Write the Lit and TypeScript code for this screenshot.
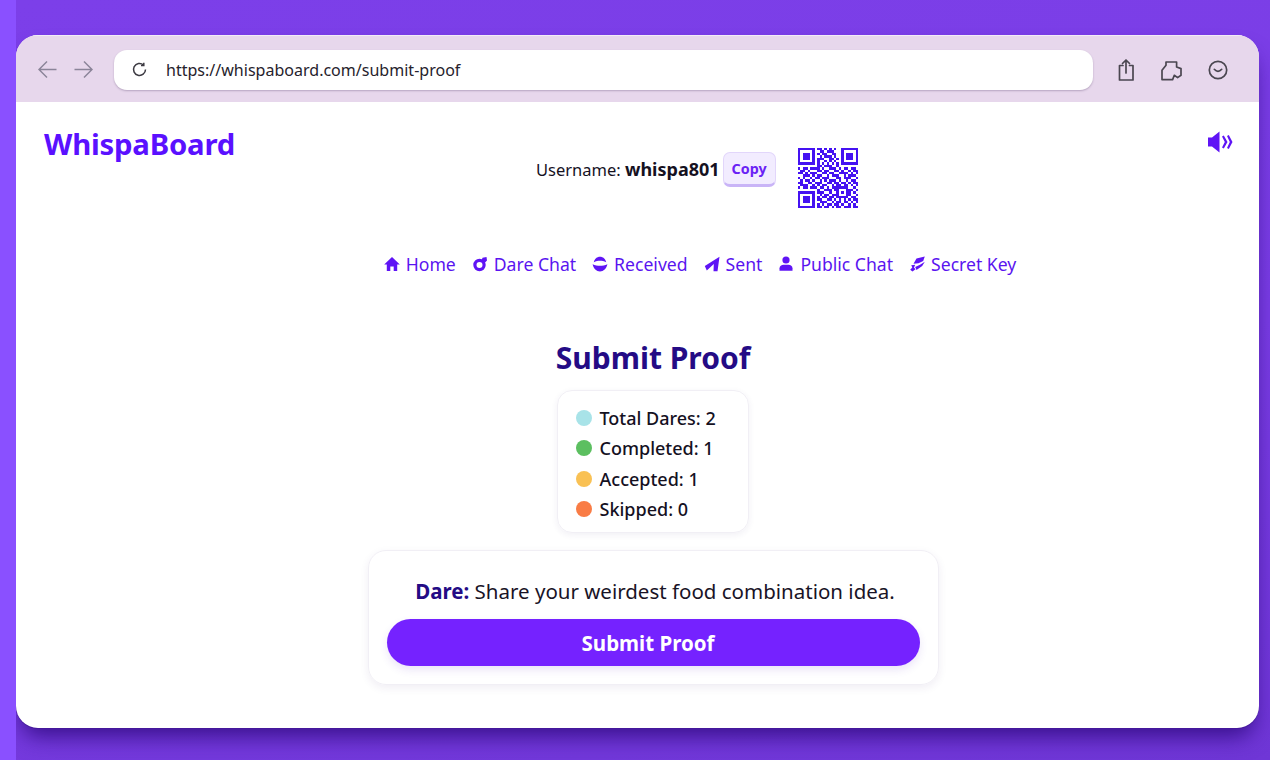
import { LitElement, html, css, svg } from "lit";
import { customElement } from "lit/decorators.js";

const QR = [
  "1111111011010101001111111",
  "1000001001101110001000001",
  "1011101010110011001011101",
  "1011101001011101001011101",
  "1011101011100110101011101",
  "1000001010010101001000001",
  "1111111010101010101111111",
  "0000000011011100100000000",
  "1011011110100111010110110",
  "0110100011011001101001011",
  "1101011100110110011110101",
  "0011101011001011100101110",
  "1010010110111000110111001",
  "0101101001010111010010110",
  "1100110111001101101101011",
  "0111001010110010110110101",
  "1011011101101011111110010",
  "0000000010011101100011101",
  "1111111011100100101011010",
  "1000001001011011100011001",
  "1011101010110110111110110",
  "1011101011001101010101011",
  "1011101001110010110110101",
  "1000001010101101101001010",
  "1111111011011010110111011",
];

const stat = [
  ["Total Dares: 2", "#a8e3e8"],
  ["Completed: 1", "#5cbf60"],
  ["Accepted: 1", "#f9c154"],
  ["Skipped: 0", "#f97c45"],
];

const navIcons = {
  home: svg`<path d="M8 1 15.800 8.500H13.200V15H9.700V10.500H6.300V15H2.800V8.500H.2Z"/>`,
  chat: svg`<path fill-rule="evenodd" d="M7.500 2.800a6.200 6.200 0 1 0 6.200 6.200 6.200 6.200 0 0 0-.6-2.600L15 4.600 14.500 1 10.500 1.800 10 3.300A6.200 6.200 0 0 0 7.500 2.800Zm0 3.200a3 3 0 1 1 0 6 3 3 0 0 1 0-6Z"/>`,
  received: svg`<path d="M1.800 6.300C2.500 3 5 .8 8 .8s5.500 2.200 6.200 5.500C12 5.200 10 4.800 8 4.800s-4 .4-6.200 1.500Z"/><path d="M.6 8.200C3 9.400 5.500 9.800 8 9.800s5-.4 7.400-1.600C14.500 12.500 11.500 15.400 8 15.400S1.500 12.500.6 8.200Z"/>`,
  sent: svg`<path d="M15.500 .8 .8 10 2.800 14.600 9.800 8 9.500 15.200 13.500 15.200Z"/>`,
  user: svg`<circle cx="8" cy="4" r="3.600"/><path d="M1.500 14.800v-2.600C1.500 10 3.500 8.800 5.500 8.800h5c2 0 4 1.200 4 3.400v2.600Z"/>`,
  key: svg`<path d="M7.500 2.500 15.800 .5 14.200 5 9.500 7.300 4.500 7.800Z"/><path d="M15.800 5.800 13.200 10 7.500 14 6.200 11 11 8.800Z"/><path d="M2.200 9.200 6.200 8.800 5 11.500 6.500 13.200 3.500 15.500 1.200 13.800 3.300 11.500Z"/>`,
};

const nav: [keyof typeof navIcons, string][] = [
  ["home", "Home"],
  ["chat", "Dare Chat"],
  ["received", "Received"],
  ["sent", "Sent"],
  ["user", "Public Chat"],
  ["key", "Secret Key"],
];

@customElement("app-root")
export class AppRoot extends LitElement {
  static styles = css`
    :host {
      display: block;
      width: 1270px;
      height: 760px;
      overflow: hidden;
      background: #8a50ff;
      font-family: "Noto Sans", "Open Sans", sans-serif;
      color: #17112b;
    }
    .stage {
      box-sizing: border-box;
      margin-left: 16px;
      height: 760px;
      padding: 35px 11px 32px 0;
      background: linear-gradient(170deg, #7c3fe9 0%, #7a3de4 55%, #6f36d6 100%);
      overflow: hidden;
    }
    .window {
      height: 693px;
      border-radius: 22px;
      overflow: hidden;
      background: #fff;
      display: flex;
      flex-direction: column;
      box-shadow: 0 1px 0 #45189c, 0 14px 22px -6px rgba(45, 8, 125, 0.85);
      position: relative;
    }
    .chrome {
      box-sizing: border-box;
      height: 67px;
      flex: none;
      background: #e7d7ec;
      border-top: 1px solid #f3ecf7;
      display: flex;
      align-items: center;
      padding: 1px 30px 0 22px;
    }
    .arrows {
      display: flex;
      gap: 17px;
      margin-right: 21px;
    }
    .arrows svg {
      width: 19px;
      height: 19px;
      fill: none;
      stroke: #8b8499;
      stroke-width: 1.500;
      display: block;
    }
    .url {
      flex: 1;
      height: 40px;
      background: #fff;
      border-radius: 13px;
      box-shadow: 0 1px 2px rgba(90, 70, 110, 0.35);
      display: flex;
      align-items: center;
      padding-left: 17px;
      font-size: 16.050px;
      color: #26222c;
      margin-right: 22px;
    }
    .url svg {
      width: 17px;
      height: 17px;
      fill: none;
      stroke: #3c3a42;
      stroke-width: 1.500;
      margin-right: 18px;
    }
    .tools {
      display: flex;
      align-items: center;
      gap: 24px;
    }
    .tools svg {
      width: 22px;
      height: 24px;
      fill: none;
      stroke: #4a4650;
      stroke-width: 1.700;
      stroke-linejoin: round;
      stroke-linecap: round;
      display: block;
    }
    .page {
      flex: 1;
      display: flex;
      flex-direction: column;
      position: relative;
    }
    .top {
      display: flex;
      padding: 22px 0 0 28px;
      height: 85px;
    }
    .logo {
      font-size: 29.300px;
      font-weight: 700;
      line-height: 40px;
      color: #5a10ff;
      width: 492px;
      flex: none;
      letter-spacing: -0.2px;
    }
    .user {
      display: flex;
      align-items: flex-start;
      font-size: 16.500px;
      color: #15111f;
      white-space: nowrap;
      padding-top: 24px;
    }
    .user .label {
      line-height: 24px;
      margin: 9px 3px 0 0;
    }
    .user b {
      font-weight: 700;
      font-size: 18px;
    }
    .copy {
      box-sizing: border-box;
      width: 53px;
      height: 35px;
      margin-top: 4px;
      border-radius: 7px;
      background: #f2ecff;
      border: 1px solid #e2d6fb;
      border-bottom: 3px solid #c9b4f7;
      color: #6a22f5;
      font: 700 14.300px "Noto Sans", sans-serif;
      padding: 0;
    }
    .qr {
      width: 60px;
      height: 60px;
      margin: 0 0 0 22px;
      display: block;
      fill: #4512f2;
    }
    .speaker {
      position: absolute;
      top: 28px;
      right: 26px;
      width: 26px;
      height: 24px;
      fill: #5f14f5;
      stroke: none;
    }
    nav {
      display: flex;
      justify-content: center;
      gap: 16px;
      padding-left: 125px;
      margin-top: 40px;
      height: 30px;
      align-items: center;
      font-size: 17.600px;
      color: #5a14f0;
      white-space: nowrap;
    }
    nav span {
      display: flex;
      align-items: center;
      gap: 6px;
    }
    nav svg {
      width: 16px;
      height: 16px;
      fill: #5f14f5;
    }
    main {
      display: flex;
      flex-direction: column;
      align-items: center;
      padding-left: 31px;
    }
    h1 {
      margin: 58px 0 0;
      font-size: 30px;
      line-height: 42px;
      font-weight: 700;
      color: #240b85;
    }
    .stats {
      box-sizing: border-box;
      width: 192px;
      height: 143px;
      margin-top: 11px;
      border-radius: 15px;
      border: 1px solid #f1eff5;
      box-shadow: 0 2px 6px rgba(60, 40, 110, 0.07);
      padding: 12px 0 0 18px;
      font-size: 18px;
      font-weight: 500;
      color: #15111f;
    }
    .stat {
      display: flex;
      align-items: center;
      gap: 7.500px;
      height: 30.300px;
    }
    .dot {
      width: 16px;
      height: 16px;
      border-radius: 50%;
      flex: none;
    }
    .dare {
      box-sizing: border-box;
      width: 571px;
      height: 135px;
      margin-top: 17px;
      border-radius: 18px;
      border: 1px solid #f1eff5;
      box-shadow: 0 3px 9px rgba(60, 40, 110, 0.08);
      padding: 21px 18px 0;
      display: flex;
      flex-direction: column;
      align-items: center;
    }
    .dare p {
      margin: 0;
      padding-left: 4px;
      font-size: 20.500px;
      line-height: 38px;
      color: #191326;
      white-space: nowrap;
    }
    .dare p b {
      color: #240b85;
      font-weight: 700;
    }
    .submit {
      width: 533px;
      height: 47px;
      margin-top: 9px;
      border: 0;
      border-radius: 24px;
      background: #7522ff;
      color: #fff;
      font: 700 20.500px "Noto Sans", sans-serif;
      box-shadow: 0 4px 8px rgba(90, 40, 200, 0.12);
      padding: 0 10px 0 0;
    }
  `;

  render() {
    return html`
      <div class="stage">
        <div class="window">
          <div class="chrome">
            <div class="arrows">
              <svg viewBox="0 0 19 19"><path d="M18.500 9.500H1M9 1.500l-8 8 8 8" /></svg>
              <svg viewBox="0 0 19 19"><path d="M.5 9.500H18M10 1.500l8 8-8 8" /></svg>
            </div>
            <div class="url">
              <svg viewBox="0 0 17 17"><path d="M14.500 8.500a6 6 0 1 1-2-4.500" /><path d="M12.800 1.800V4.500H10" /></svg>
              https://whispaboard.com/submit-proof
            </div>
            <div class="tools">
              <svg viewBox="0 0 22 24"><path d="M8 7.500H4.500v14.500h13.500V7.500H14.500M11 15V2M7.500 5.500 11 2l3.500 3.500" /></svg>
              <svg viewBox="0 0 22 24"><path d="M1 21.600V12.300L5 7.300V4H15.600V9L20 10.600V17.300L16.600 19.600 13.300 17.300 11.600 21.600Z" /></svg>
              <svg viewBox="0 0 22 24"><circle cx="11" cy="12" r="8.700" /><path d="M7.300 11.300Q11 15.500 14.700 11.300" /></svg>
            </div>
          </div>
          <div class="page">
            <div class="top">
              <div class="logo">WhispaBoard</div>
              <div class="user">
                <span class="label">Username: <b>whispa801</b></span>
                <button class="copy">Copy</button>
                <svg class="qr" viewBox="0 0 25 25" shape-rendering="crispEdges">
                  ${QR.map((row, y) =>
                    [...row].map((c, x) =>
                      c === "1" ? svg`<rect x=${x} y=${y} width="1" height="1" />` : null
                    )
                  )}
                </svg>
              </div>
            </div>
            <svg class="speaker" viewBox="0 0 26 24">
              <path d="M1 7.500H5L12.500 1.500V22.500L5 16.500H1Z" />
              <path d="M15 6.500 16.800 5.500 20.500 12 16.800 18.500 15 17.500 17.800 12Z" />
              <path d="M20 6 21.800 5 25.500 12 21.800 19 20 18 22.800 12Z" />
            </svg>
            <nav>
              ${nav.map(
                ([icon, label]) => html`<span><svg viewBox="0 0 16 16">${navIcons[icon]}</svg>${label}</span>`
              )}
            </nav>
            <main>
              <h1>Submit Proof</h1>
              <div class="stats">
                ${stat.map(
                  ([label, color]) =>
                    html`<div class="stat"><i class="dot" style="background:${color}"></i>${label}</div>`
                )}
              </div>
              <div class="dare">
                <p><b>Dare:</b> Share your weirdest food combination idea.</p>
                <button class="submit">Submit Proof</button>
              </div>
            </main>
          </div>
        </div>
      </div>
    `;
  }
}
